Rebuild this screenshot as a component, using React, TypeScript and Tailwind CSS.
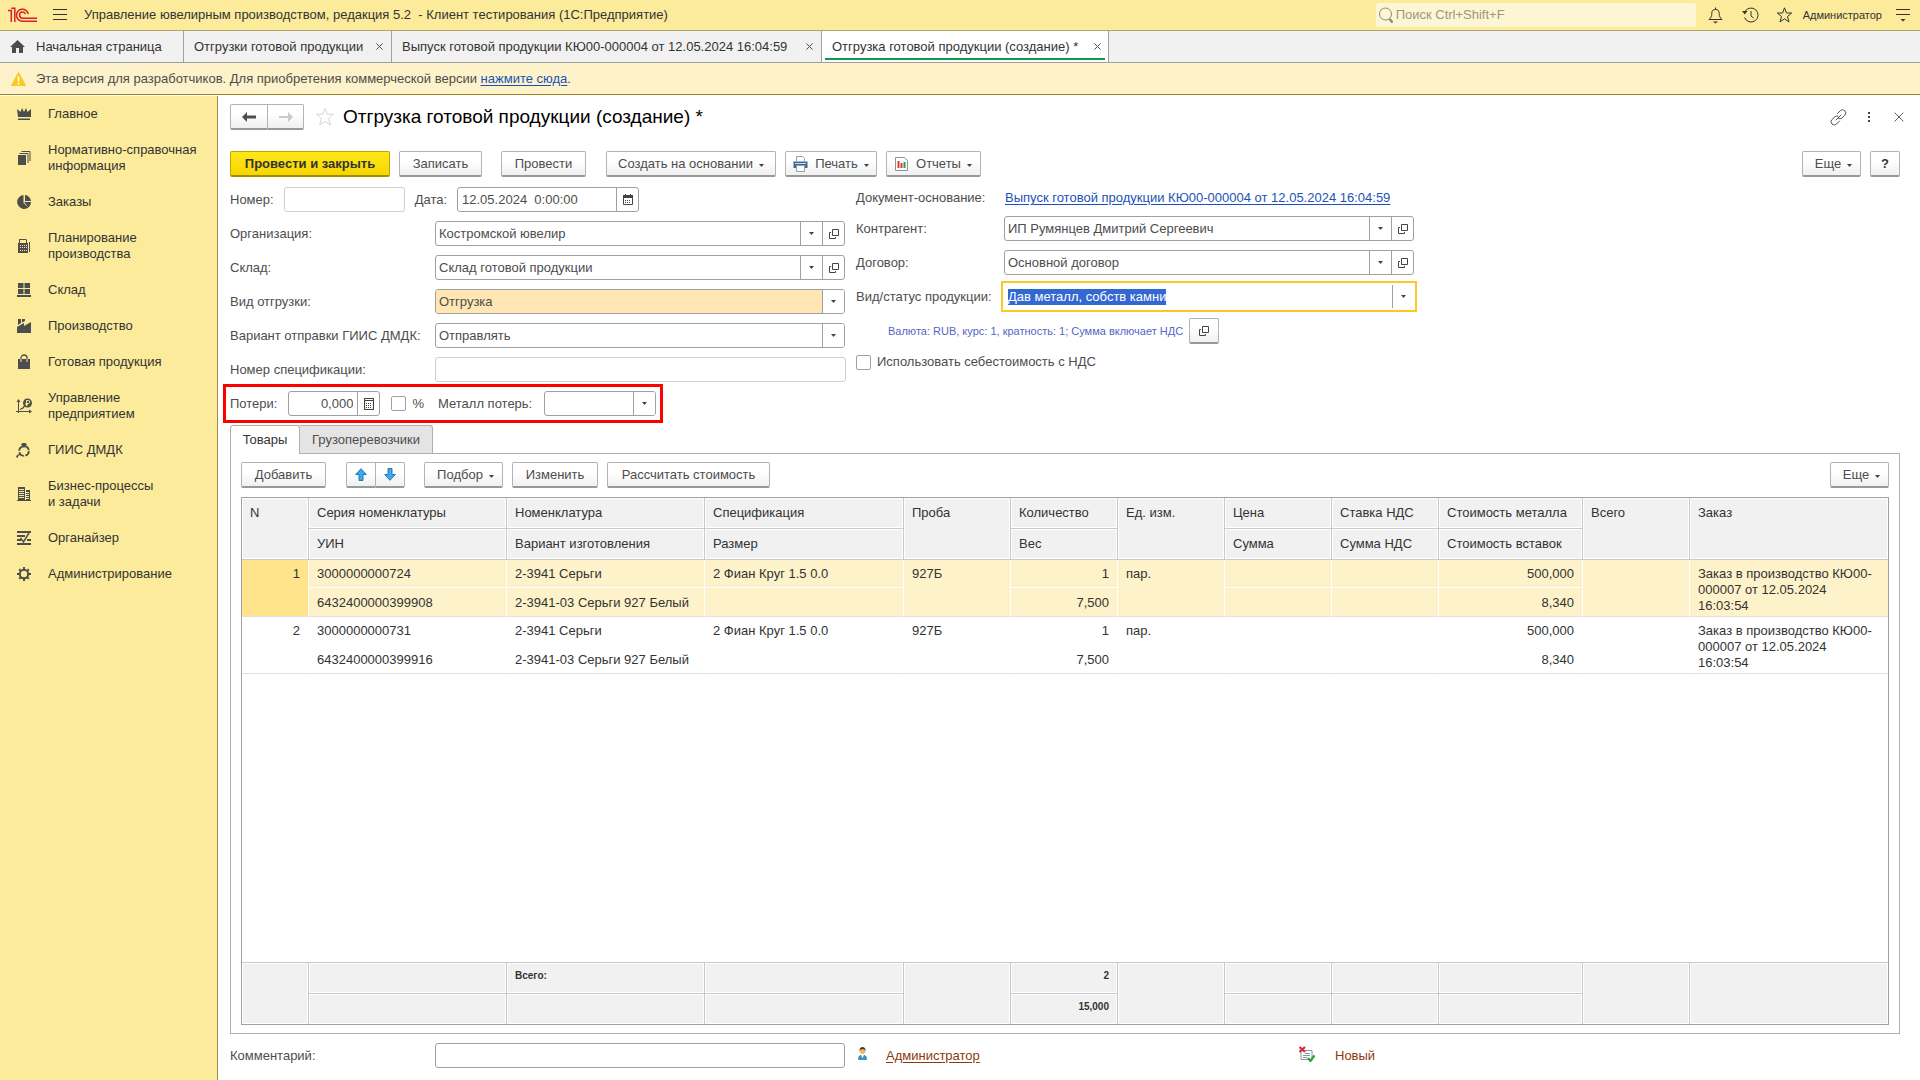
import { useEffect, useRef } from "react";
import type { ReactNode } from "react";
import { clsx } from "clsx";

const ink = "#4d4d4d";

function NavIcon({ name }: { name: string }) {
  return (
    <svg width="16" height="16" viewBox="0 0 16 16" fill={ink} className="shrink-0">
      {name === "crown" && (
        <>
          <path d="M1 3l3.5 3L6 2l2 4 2-4 1.5 4L15 3v8H2z" />
          <path d="M2 12.5h12V14H2z" />
        </>
      )}
      {name === "docs" && (
        <>
          <path d="M2 5h8v10H2z" />
          <path d="M3.500 3.500H12V13M5.500 1.500h8.500V11" fill="none" stroke={ink} />
        </>
      )}
      {name === "pie" && (
        <path d="M7.500 1v8l5 4.500A7 7 0 1 1 7.500 1zM9 1a6.500 6.500 0 0 1 6 6H9zM8 8h7a7 7 0 0 1-2.500 5.500z" />
      )}
      {name === "calc" && (
        <>
          <path
            fillRule="evenodd"
            d="M3 1h7l1 1v3h1v10H2V5h1zM4 2v3h6V2zM4 7v1h1V7zm2 0v1h1V7zm2 0v1h1V7zm2 0v1h1V7zM4 9v1h1V9zm2 0v1h1V9zm2 0v1h1V9zm2 0v1h1V9zM4 12v1h1v-1zm2 0v1h1v-1zm2 0v1h1v-1zm2 0v1h1v-1z"
          />
          <path d="M13 4h1v10h-1z" />
        </>
      )}
      {name === "windows" && (
        <path d="M2 1h5.500v5H2zM8.500 1H14v5H8.500zM2 7h5.500v5H2zM8.500 7H14v5H8.500zM1 13h14v2H1z" />
      )}
      {name === "factory" && (
        <path d="M2 1h3v4L2 7zM6 1h3v2L6 4.500zM1 9l7-4v3l7-4v11H1z" />
      )}
      {name === "bag" && (
        <>
          <path d="M2 5h12v10H2z" />
          <path d="M5 8V4a3 3 0 0 1 6 0v4" fill="none" stroke={ink} strokeWidth="1.300" />
          <path d="M5 5v3M11 5v3" stroke="#fbeb9b" />
        </>
      )}
      {name === "growth" && (
        <>
          <path d="M2.500 15V2M0 13.500h15" fill="none" stroke={ink} />
          <path d="M0.500 4L2.500 1l2 3zM13 11.500l3 2-3 2z" />
          <path d="M4 11.500l3-1.500 1.500-2" fill="none" stroke={ink} strokeWidth="1.300" />
          <circle cx="11.500" cy="5" r="4.500" />
          <path d="M10.500 8V2.500h1.800a1.300 1.300 0 0 1 0 3H9.500M9.500 6.800h2.500" fill="none" stroke="#fbeb9b" />
        </>
      )}
      {name === "ring" && (
        <>
          <circle cx="8" cy="9" r="4.800" fill="none" stroke={ink} strokeWidth="1.800" strokeDasharray="6 1.500" />
          <path d="M5 2.500L6.500 1h3L11 2.500 8 6zM0 15l1-2 3-1.500L5 13l-2.500.5L1.500 16z" />
        </>
      )}
      {name === "building" && (
        <>
          <path
            fillRule="evenodd"
            d="M2 1h7v14H2zM3 3v1h5V3zm0 2v1h5V5zm0 2v1h5V7zm0 2v1h5V9zm0 2v1h5v-1zM10 4h4v11h-4zm0 2v1h3V6zm0 2v1h3V8zm0 2v1h3v-1zm0 2v1h3v-1z"
          />
          <path d="M1 14h14v1H1z" />
        </>
      )}
      {name === "list" && (
        <>
          <path d="M1 1h14v2H1zM1 5h8v2H1zM1 9h4v2H1zM11 9h4v2h-4zM1 13h14v2H1z" />
          <path d="M4.500 8l3 4 5.500-9" fill="none" stroke={ink} strokeWidth="1.500" />
        </>
      )}
      {name === "gear" && (
        <>
          <circle cx="8" cy="8" r="4.200" fill="none" stroke={ink} strokeWidth="2" />
          <path
            d="M8 1v2.500M8 12.500V15M1 8h2.500M12.500 8H15M3.200 3.200l1.700 1.700M11.100 11.100l1.700 1.700M3.200 12.800l1.700-1.700M11.100 4.900l1.700-1.700"
            stroke={ink}
            strokeWidth="2"
          />
        </>
      )}
    </svg>
  );
}

const sections = [
  { icon: "crown", title: "Главное" },
  { icon: "docs", title: "Нормативно-справочная\nинформация" },
  { icon: "pie", title: "Заказы" },
  { icon: "calc", title: "Планирование\nпроизводства" },
  { icon: "windows", title: "Склад" },
  { icon: "factory", title: "Производство" },
  { icon: "bag", title: "Готовая продукция" },
  { icon: "growth", title: "Управление\nпредприятием" },
  { icon: "ring", title: "ГИИС ДМДК" },
  { icon: "building", title: "Бизнес-процессы\nи задачи" },
  { icon: "list", title: "Органайзер" },
  { icon: "gear", title: "Администрирование" },
];

const openTabs = [
  { title: "Отгрузки готовой продукции", width: "min-w-[208px]" },
  { title: "Выпуск готовой продукции КЮ00-000004 от 12.05.2024 16:04:59", width: "min-w-[430px]" },
];

const rows = [
  { n: 1, series: "3000000000724", uin: "6432400000399908" },
  { n: 2, series: "3000000000731", uin: "6432400000399916" },
];

function Caret({ className }: { className?: string }) {
  return (
    <svg width="5" height="3" viewBox="0 0 5 3" fill="#444" className={clsx("shrink-0", className)}>
      <path d="M0 0h5L2.500 3z" />
    </svg>
  );
}

function OpenIcon() {
  return (
    <svg width="10" height="10" viewBox="0 0 10 10" fill="none" stroke="#444">
      <path d="M3.500 0.500h6v6h-6zM2 3.500H0.500v6h6V8" />
    </svg>
  );
}

function CloseIcon({ size = 7 }: { size?: number }) {
  return (
    <svg width={size} height={size} viewBox="0 0 8 8" fill="none" stroke="#4a4a4a" strokeWidth={size > 8 ? 0.7 : 1.1}>
      <path d="M0.500 0.500l7 7M7.500 0.500l-7 7" />
    </svg>
  );
}

function Btn({ children, className, label }: { children: ReactNode; className?: string; label?: string }) {
  return (
    <button
      type="button"
      aria-label={label}
      className={clsx(
        "flex h-[26px] items-center justify-center whitespace-nowrap rounded-[2px] border border-b-2 border-[#b3b3b3] border-b-[#989898] bg-linear-to-b from-white from-40% to-[#f0f0f0]",
        className
      )}
    >
      {children}
    </button>
  );
}

const box = "flex h-[25px] rounded-[3px] border border-[#a0a0a0] bg-white";
const cell = "flex w-[22px] items-center justify-center border-l border-[#a0a0a0]";

function SelectField({
  id,
  value,
  open,
  filled,
  className,
}: {
  id: string;
  value: string;
  open?: boolean;
  filled?: boolean;
  className?: string;
}) {
  return (
    <div className={clsx(box, className)}>
      <div className="grid min-w-0 flex-1 grid-cols-[1fr_22px]">
        <select
          id={id}
          defaultValue={value}
          className={clsx(
            "col-span-2 col-start-1 row-start-1 w-full appearance-none rounded-[2px] pl-[3px] outline-none",
            filled && "bg-[#ffe6b3]"
          )}
        >
          <option>{value}</option>
        </select>
        <span
          className={clsx(cell, "pointer-events-none col-start-2 row-start-1 bg-white", !open && "rounded-r-[2px]")}
        >
          <Caret />
        </span>
      </div>
      {open && (
        <button type="button" aria-label="Открыть" className={cell}>
          <OpenIcon />
        </button>
      )}
    </div>
  );
}

function Row({ id, label, children }: { id: string; label: string; children: ReactNode }) {
  return (
    <div className="flex items-center">
      <label htmlFor={id} className="w-[205px] shrink-0 whitespace-nowrap">
        {label}
      </label>
      {children}
    </div>
  );
}

function RightRow({ id, label, children }: { id: string; label: string; children: ReactNode }) {
  return (
    <div className="flex items-center">
      <label htmlFor={id} className="w-[148px] shrink-0 whitespace-nowrap">
        {label}
      </label>
      {children}
    </div>
  );
}

function Check({ id }: { id: string }) {
  return (
    <input
      id={id}
      type="checkbox"
      className="size-[15px] shrink-0 appearance-none rounded-[2px] border border-[#a0a0a0] bg-white checked:bg-[#ffe17a]"
    />
  );
}

function Cols() {
  return (
    <colgroup>
      <col className="w-[67px]" />
      <col className="w-[198px]" />
      <col className="w-[198px]" />
      <col className="w-[199px]" />
      <col className="w-[107px]" />
      <col className="w-[107px]" />
      <col className="w-[107px]" />
      <col className="w-[107px]" />
      <col className="w-[107px]" />
      <col className="w-[144px]" />
      <col className="w-[107px]" />
      <col />
    </colgroup>
  );
}

const head =
  "h-[31px] border-b border-r border-[#c8c8c8] bg-[#f1f1f1] px-2 py-[7px] text-left align-top font-normal whitespace-nowrap shadow-[inset_0_0_0_1px_#fff]";
const foot =
  "h-[31px] border-r border-t border-[#c8c8c8] bg-[#f1f1f1] px-2 pb-1 text-[10px] font-bold shadow-[inset_0_0_0_1px_#fff]";

function GoodsTable() {
  return (
    <div className="flex flex-1 flex-col border border-[#a0a0a0] text-[#333]">
      <table className="w-full table-fixed border-separate border-spacing-0">
        <Cols />
        <thead>
          <tr>
            <th rowSpan={2} className={head}>N</th>
            <th className={head}>Серия номенклатуры</th>
            <th className={head}>Номенклатура</th>
            <th className={head}>Спецификация</th>
            <th rowSpan={2} className={head}>Проба</th>
            <th className={head}>Количество</th>
            <th rowSpan={2} className={head}>Ед. изм.</th>
            <th className={head}>Цена</th>
            <th className={head}>Ставка НДС</th>
            <th className={head}>Стоимость металла</th>
            <th rowSpan={2} className={head}>Всего</th>
            <th rowSpan={2} className={clsx(head, "border-r-0")}>Заказ</th>
          </tr>
          <tr>
            {["УИН", "Вариант изготовления", "Размер", "Вес", "Сумма", "Сумма НДС", "Стоимость вставок"].map((t) => (
              <th key={t} className={head}>
                {t}
              </th>
            ))}
          </tr>
        </thead>
        {rows.map((row) => {
          const active = row.n === 1;
          const base = "px-2 pb-[5px] align-top whitespace-nowrap border-r border-b border-white";
          const up = clsx(base, "h-[28px] pt-[6px]", active && "bg-[#fdf2c9]");
          const low = clsx(base, "h-[29px] pt-[7px] border-b-[#e0e0e0]", active && "bg-[#fdf2c9]");
          const tall = clsx(base, "pt-[6px] border-b-[#e0e0e0]", active && "bg-[#fdf2c9]");
          return (
            <tbody key={row.n}>
              <tr>
                <td
                  rowSpan={2}
                  className={clsx(base, "pt-[6px] border-b-[#e0e0e0] text-right", active && "bg-[#ffe48c]")}
                >
                  {row.n}
                </td>
                <td className={up}>{row.series}</td>
                <td className={up}>2-3941 Серьги</td>
                <td className={up}>2 Фиан Круг 1.5 0.0</td>
                <td rowSpan={2} className={tall}>927Б</td>
                <td className={clsx(up, "text-right")}>1</td>
                <td rowSpan={2} className={tall}>пар.</td>
                <td className={up} />
                <td className={up} />
                <td className={clsx(up, "text-right")}>500,000</td>
                <td rowSpan={2} className={tall} />
                <td
                  rowSpan={2}
                  className={clsx(
                    "border-b border-b-[#e0e0e0] px-2 pt-[6px] pb-[2px] align-top",
                    active && "bg-[#fdf2c9]"
                  )}
                >
                  Заказ в производство КЮ00-000007 от 12.05.2024 16:03:54
                </td>
              </tr>
              <tr>
                <td className={low}>{row.uin}</td>
                <td className={low}>2-3941-03 Серьги 927 Белый</td>
                <td className={low} />
                <td className={clsx(low, "text-right")}>7,500</td>
                <td className={low} />
                <td className={low} />
                <td className={clsx(low, "text-right")}>8,340</td>
              </tr>
            </tbody>
          );
        })}
      </table>

      <table className="mt-auto w-full table-fixed border-separate border-spacing-0">
        <Cols />
        <tbody>
          <tr>
            <td rowSpan={2} className={foot} />
            <td className={foot} />
            <td className={foot}>Всего:</td>
            <td className={foot} />
            <td rowSpan={2} className={foot} />
            <td className={clsx(foot, "text-right")}>2</td>
            <td rowSpan={2} className={foot} />
            <td className={foot} />
            <td className={foot} />
            <td className={foot} />
            <td rowSpan={2} className={foot} />
            <td rowSpan={2} className={clsx(foot, "border-r-0")} />
          </tr>
          <tr>
            <td className={foot} />
            <td className={foot} />
            <td className={foot} />
            <td className={clsx(foot, "text-right")}>15,000</td>
            <td className={foot} />
            <td className={foot} />
            <td className={foot} />
          </tr>
        </tbody>
      </table>
    </div>
  );
}

function TitleBar() {
  return (
    <header className="flex h-[31px] items-center border-b border-[#a9a673] bg-[#fbeb9b] pl-2 pr-[10px] text-[#333]">
      <svg width="30" height="16" viewBox="0 0 30 16" fill="none" stroke="#da1f26" strokeWidth="1.500">
        <path d="M0 3.500h3.300V15M3.300 1.300H6.800V15" />
        <path d="M20.300 7A6 6 0 1 0 14.500 14.200H29" />
        <path d="M17.500 7A3.100 3.100 0 1 0 14.500 11.200H29" />
      </svg>
      <button type="button" aria-label="Меню" className="mx-[15px]">
        <svg width="14" height="12" viewBox="0 0 14 12" stroke="#333">
          <path d="M0 0.500h14M0 5.500h14M0 10.500h14" />
        </svg>
      </button>
      <p className="ml-[2px] whitespace-pre">
        Управление ювелирным производством, редакция 5.2  - Клиент тестирования (1С:Предприятие)
      </p>
      <div className="ml-auto flex h-6 w-[320px] items-center rounded-[2px] bg-[#fdf6d5] pl-[3px]">
        <svg width="15" height="17" viewBox="0 0 15 17" fill="none" stroke="#8d8a78" className="shrink-0">
          <circle cx="6.500" cy="7" r="6" />
          <path d="M10.500 12l3 3.500" strokeWidth="2.500" />
        </svg>
        <input
          aria-label="Поиск"
          placeholder="Поиск Ctrl+Shift+F"
          className="ml-[2px] min-w-0 flex-1 bg-transparent outline-none placeholder:text-[#9c967c]"
        />
      </div>
      <button type="button" aria-label="Уведомления" className="ml-3">
        <svg width="15" height="18" viewBox="0 0 15 18" fill="none" stroke="#333">
          <path d="M1 13.500h13c-2-2-2.800-3-2.800-6C11.200 4.500 10 3.500 7.500 3.500S3.800 4.500 3.800 7.500C3.800 10.500 3 11.500 1 13.500zM7.500 3.500V1.500" />
          <path d="M5 15.500h5L7.500 17.500z" fill="#333" stroke="none" />
        </svg>
      </button>
      <button type="button" aria-label="История" className="ml-[19px]">
        <svg width="17" height="18" viewBox="0 0 17 18" fill="none" stroke="#333">
          <path d="M3 5.500a7 7 0 1 1-.5 6" />
          <path d="M9 5v5l2.500 2" />
          <path d="M0 5h5.500L2.800 8.500z" fill="#333" stroke="none" />
        </svg>
      </button>
      <button type="button" aria-label="Избранное" className="ml-[17px]">
        <svg width="17" height="18" viewBox="0 0 17 18" fill="none" stroke="#333">
          <path d="M8.500 1.800l1.900 5.200h5.300l-4.200 3.500 1.500 5.500-4.500-3.200L4 16l1.500-5.500L1.300 7h5.300z" />
        </svg>
      </button>
      <a href="#user" className="ml-[10px] text-[11px]">Администратор</a>
      <button type="button" aria-label="Настройки" className="ml-[14px]">
        <svg width="14" height="14" viewBox="0 0 14 14" stroke="#333">
          <path d="M0 1.500h14M0 6.500h14" />
          <path d="M4.500 11h5L7 13.500z" fill="#333" stroke="none" />
        </svg>
      </button>
    </header>
  );
}

function WindowTabs() {
  return (
    <nav className="flex h-8 border-b border-[#a0a0a0] bg-[#f1f1f1] text-[#333]">
      <a href="#home" className="flex min-w-[184px] items-center border-r border-[#a0a0a0] pl-[10px] pr-4">
        <svg width="15" height="13" viewBox="0 0 15 13" fill={ink}>
          <path d="M7.500 0L15 7h-2v6H9V8H6v5H2V7H0z" />
        </svg>
        <span className="ml-[11px]">Начальная страница</span>
      </a>
      {openTabs.map((t) => (
        <div
          key={t.title}
          className={clsx("flex items-center justify-between gap-2 border-r border-[#a0a0a0] pl-[10px] pr-2", t.width)}
        >
          <a href="#tab">{t.title}</a>
          <button type="button" aria-label="Закрыть вкладку">
            <CloseIcon />
          </button>
        </div>
      ))}
      <div className="min-w-[287px] border-r border-[#a0a0a0] bg-white px-[3px] pb-[2px]">
        <div className="flex h-full items-center justify-between gap-2 border-b-2 border-[#0a9a50] pl-[7px] pr-1 pt-[4px]">
          <a href="#current">Отгрузка готовой продукции (создание) *</a>
          <button type="button" aria-label="Закрыть вкладку">
            <CloseIcon />
          </button>
        </div>
      </div>
    </nav>
  );
}

export default function App() {
  const statusRef = useRef<HTMLInputElement>(null);

  useEffect(() => {
    statusRef.current?.focus();
    statusRef.current?.select();
  }, []);

  return (
    <div className="flex min-h-screen flex-col bg-white font-['Liberation_Sans',Arial,sans-serif] text-[13px] leading-4 text-[#4d4d4d]">
      <TitleBar />
      <WindowTabs />
      <div className="flex h-8 items-center border-b border-[#98801c] bg-[#fdf2c9] pl-[11px]">
        <svg width="15" height="14" viewBox="0 0 15 14">
          <path d="M7.500 0.500L14.500 13.500H0.500z" fill="#fbc81e" stroke="#fbc81e" strokeLinejoin="round" />
          <path d="M7.500 4.500v5M7.500 10.500v2" stroke="#fff" strokeWidth="1.600" />
        </svg>
        <p className="ml-[10px]">
          Эта версия для разработчиков. Для приобретения коммерческой версии{" "}
          <a href="#buy" className="text-[#1a53b5] underline underline-offset-2">нажмите сюда</a>.
        </p>
      </div>

      <div className="flex flex-1">
        <aside className="mt-[1px] w-[218px] shrink-0 border-r border-[#a08f45] bg-[#fbeb9b] text-[#333]">
          {sections.map((s) => (
            <a key={s.icon} href={"#" + s.icon} className="flex items-center gap-4 py-[10px] pl-4">
              <NavIcon name={s.icon} />
              <span className="whitespace-pre">{s.title}</span>
            </a>
          ))}
        </aside>

        <main className="flex min-w-0 flex-1 flex-col pl-3 pr-5 pt-[10px]">
          <div className="flex h-6 items-center">
            <div className="flex">
              <Btn label="Назад" className="w-[38px] rounded-r-none">
                <svg width="14" height="10" viewBox="0 0 14 10" fill={ink}>
                  <path d="M0 5l5-5v3.500h9v3H5V10z" />
                </svg>
              </Btn>
              <Btn label="Вперед" className="w-[36px] rounded-l-none border-l-0">
                <svg width="14" height="10" viewBox="0 0 14 10" fill="#c9c9c9">
                  <path d="M14 5L9 0v4H0v2h9v4z" />
                </svg>
              </Btn>
            </div>
            <svg width="20" height="20" viewBox="0 0 20 20" fill="none" stroke="#d5d5d5" className="ml-[11px]">
              <path d="M10 1.500l2.300 5.700h6.200l-5 4.300 1.900 6.500-5.400-3.700L4.600 18l1.900-6.500-5-4.300h6.200z" />
            </svg>
            <h1 className="ml-2 text-[19px] leading-6 text-black">Отгрузка готовой продукции (создание) *</h1>
            <div className="ml-auto -mr-1 flex items-center">
              <button type="button" aria-label="Получить ссылку">
                <svg width="17" height="17" viewBox="0 0 17 17" fill="none" stroke="#555" strokeLinecap="round">
                  <path d="M7.500 4.500l2.800-2.800a3 3 0 0 1 4.500 4.500L12 9a3 3 0 0 1-3.500.5" />
                  <path d="M9.500 12l-3 3A3 3 0 0 1 2 10.500L4.800 7.800A3 3 0 0 1 8 7.200M6 11l5-5" />
                </svg>
              </button>
              <button type="button" aria-label="Ещё действия" className="ml-5">
                <svg width="4" height="14" viewBox="0 0 4 14" fill="#444">
                  <path d="M1 2h2v2H1zM1 6h2v2H1zM1 10h2v2H1z" />
                </svg>
              </button>
              <button type="button" aria-label="Закрыть" className="ml-[23px]">
                <CloseIcon size={10} />
              </button>
            </div>
          </div>

          <div className="mt-[22px] flex">
            <button
              type="button"
              className="flex h-[26px] w-[160px] items-center justify-center rounded-[2px] border border-b-2 border-[#c2a400] border-b-[#a68d00] bg-linear-to-b from-[#ffe817] to-[#f7d600] font-bold text-[#333]"
            >
              Провести и закрыть
            </button>
            <Btn className="ml-[9px] w-[83px]">Записать</Btn>
            <Btn className="ml-[19px] w-[85px]">Провести</Btn>
            <Btn className="ml-5 w-[170px]">
              Создать на основании <Caret className="ml-[6px] mt-1" />
            </Btn>
            <Btn className="ml-[9px] w-[92px]">
              <svg width="15" height="16" viewBox="0 0 15 16" className="mr-[7px]">
                <path d="M3.500 5V0.500h6l2 2V5" fill="#fff" stroke="#8aa0b4" />
                <path d="M0.500 5.500h14V12h-14z" fill="#3c6a94" />
                <path d="M2 7.500h11" stroke="#c8d8e6" />
                <path d="M3.500 9.500h8v6h-8z" fill="#fff" stroke="#8aa0b4" />
              </svg>
              Печать <Caret className="ml-[6px] mt-1" />
            </Btn>
            <Btn className="ml-[9px] w-[95px]">
              <svg width="13" height="14" viewBox="0 0 13 14" className="mr-2">
                <path d="M0.500 0.500h9l3 3v10h-12z" fill="#fff" stroke="#8296a8" />
                <path d="M2.500 4h2v7h-2z" fill="#e03a2e" />
                <path d="M5.500 6h2v5h-2z" fill="#e03a2e" />
                <path d="M8.500 5h2v6h-2z" fill="#24a148" />
              </svg>
              Отчеты <Caret className="ml-[6px] mt-1" />
            </Btn>
            <Btn className="ml-auto w-[59px]">
              <span className="ml-1">Еще</span> <Caret className="ml-[6px] mt-1" />
            </Btn>
            <Btn label="Справка" className="ml-[9px] w-[30px] font-bold text-[#333]">?</Btn>
          </div>

          <div className="mt-[10px] flex items-start gap-[10px]">
            <div className="flex w-[616px] flex-col gap-[9px]">
              <div className="flex items-center">
                <label htmlFor="number">Номер:</label>
                <input id="number" className="ml-[10px] h-[25px] w-[121px] rounded-[3px] border border-[#cfcfcf] px-1" />
                <label htmlFor="date" className="ml-[10px]">Дата:</label>
                <div className={clsx(box, "ml-[10px] w-[182px]")}>
                  <input id="date" defaultValue="12.05.2024  0:00:00" className="min-w-0 flex-1 whitespace-pre px-1 outline-none" />
                  <button type="button" aria-label="Выбрать дату" className={cell}>
                    <svg width="10" height="11" viewBox="0 0 10 11">
                      <path d="M0.500 1.500h9v9h-9z" fill="#fff" stroke="#444" />
                      <path d="M0 1h10v3H0zM2 0h1v2H2zM7 0h1v2H7z" fill="#444" />
                      <path d="M2 6.500h6M2 8.500h6" stroke="#444" strokeDasharray="1 1" />
                    </svg>
                  </button>
                </div>
              </div>
              <Row id="org" label="Организация:">
                <SelectField id="org" value="Костромской ювелир" open className="w-[410px]" />
              </Row>
              <Row id="stock" label="Склад:">
                <SelectField id="stock" value="Склад готовой продукции" open className="w-[410px]" />
              </Row>
              <Row id="kind" label="Вид отгрузки:">
                <SelectField id="kind" value="Отгрузка" filled className="w-[410px]" />
              </Row>
              <Row id="giis" label="Вариант отправки ГИИС ДМДК:">
                <SelectField id="giis" value="Отправлять" className="w-[410px]" />
              </Row>
              <Row id="spec" label="Номер спецификации:">
                <input id="spec" className="h-[25px] w-[411px] rounded-[3px] border border-[#cfcfcf] px-1" />
              </Row>
            </div>

            <div className="flex flex-col pt-[3px]">
              <div className="mb-[10px] flex">
                <span className="w-[149px]">Документ-основание:</span>
                <a href="#base" className="whitespace-nowrap text-[#1a53b5] underline underline-offset-2">
                  Выпуск готовой продукции КЮ00-000004 от 12.05.2024 16:04:59
                </a>
              </div>
              <div className="flex flex-col gap-[9px]">
                <RightRow id="partner" label="Контрагент:">
                  <SelectField id="partner" value="ИП Румянцев Дмитрий Сергеевич" open className="w-[410px]" />
                </RightRow>
                <RightRow id="contract" label="Договор:">
                  <SelectField id="contract" value="Основной договор" open className="w-[410px]" />
                </RightRow>
              </div>
              <div className="mt-[6px] flex items-center">
                <label htmlFor="status" className="w-[145px] shrink-0 whitespace-nowrap">
                  Вид/статус продукции:
                </label>
                <div className="flex h-[31px] w-[416px] items-center border-2 border-[#fbc926] py-[2px] pl-[5px] pr-[1px]">
                  <input
                    id="status"
                    ref={statusRef}
                    defaultValue="Дав металл, собств камни"
                    className="min-w-0 flex-1 outline-none selection:bg-[#3367d1] selection:text-white"
                  />
                  <button type="button" aria-label="Выбрать" className={clsx(cell, "h-full")}>
                    <Caret />
                  </button>
                </div>
              </div>
              <div className="mt-[6px] flex items-center pl-8">
                <span className="w-[301px] whitespace-nowrap text-[11px] text-[#5466c4]">
                  Валюта: RUB, курс: 1, кратность: 1; Сумма включает НДС
                </span>
                <Btn label="Изменить валюту" className="w-[30px]">
                  <OpenIcon />
                </Btn>
              </div>
              <div className="mt-[10px] flex items-center gap-[6px]">
                <Check id="cost" />
                <label htmlFor="cost">Использовать себестоимость с НДС</label>
              </div>
            </div>
          </div>

          <div className="-ml-[7px] mt-[2px] flex h-[39px] items-center self-start border-[3px] border-[#fe0000] px-1">
            <label htmlFor="loss">Потери:</label>
            <div className={clsx(box, "ml-[11px] w-[92px]")}>
              <input id="loss" defaultValue="0,000" className="min-w-0 flex-1 px-1 text-right outline-none" />
              <button type="button" aria-label="Калькулятор" className={cell}>
                <svg width="10" height="12" viewBox="0 0 10 12" fill="none" stroke="#444">
                  <path d="M0.500 0.500h9v11h-9zM1 2.500h8" strokeWidth="1.200" />
                  <path d="M2 5.500h6M2 7.500h6M2 9.500h6" strokeDasharray="1 1" />
                </svg>
              </button>
            </div>
            <span className="ml-[11px] flex">
              <Check id="percent" />
            </span>
            <label htmlFor="percent" className="ml-[6px]">%</label>
            <label htmlFor="metal" className="ml-[14px]">Металл потерь:</label>
            <SelectField id="metal" value="" className="ml-3 w-[112px]" />
          </div>

          <div role="tablist" className="mt-[2px] flex h-[28px]">
            <button
              type="button"
              role="tab"
              aria-selected="true"
              className="z-10 -mb-[1px] w-[70px] rounded-t-[3px] border border-b-0 border-[#b0b0b0] bg-white text-[#333]"
            >
              Товары
            </button>
            <button
              type="button"
              role="tab"
              aria-selected="false"
              className="w-[133px] rounded-tr-[3px] border border-l-0 border-b-0 border-[#b0b0b0] bg-[#e4e4e4]"
            >
              Грузоперевозчики
            </button>
          </div>

          <div className="flex flex-1 flex-col border border-[#b0b0b0] px-[10px] pb-[8px] pt-[8px]">
            <div className="mb-[9px] flex">
              <Btn className="w-[85px]">Добавить</Btn>
              <Btn label="Переместить вверх" className="ml-5 w-[30px] rounded-r-none">
                <svg width="12" height="13" viewBox="0 0 12 13" fill="#3fa9e6" stroke="#1f7ab5">
                  <path d="M6 0.700L11.300 6.500H8v6H4v-6H0.700z" />
                </svg>
              </Btn>
              <Btn label="Переместить вниз" className="w-[29px] rounded-l-none border-l-0">
                <svg width="12" height="13" viewBox="0 0 12 13" fill="#3fa9e6" stroke="#1f7ab5">
                  <path d="M6 12.300L0.700 6.500H4v-6h4v6h3.300z" />
                </svg>
              </Btn>
              <Btn className="ml-[19px] w-[79px]">
                <span className="ml-1">Подбор</span> <Caret className="ml-[6px] mt-1" />
              </Btn>
              <Btn className="ml-[9px] w-[86px]">Изменить</Btn>
              <Btn className="ml-[9px] w-[163px]">Рассчитать стоимость</Btn>
              <Btn className="ml-auto w-[59px]">
                <span className="ml-1">Еще</span> <Caret className="ml-[6px] mt-1" />
              </Btn>
            </div>
            <GoodsTable />
          </div>

          <div className="mb-3 mt-[9px] flex items-center">
            <label htmlFor="comment" className="w-[205px] shrink-0">Комментарий:</label>
            <input id="comment" className="h-[25px] w-[410px] rounded-[3px] border border-[#a0a0a0] px-1" />
            <svg width="11" height="13" viewBox="0 0 11 14" className="mb-1 ml-3">
              <path d="M1 14c-1-3 1-5.500 3-5.500h3c2 0 4 2.500 3 5.500z" fill="#3b93c4" />
              <path d="M4 8.500h3L5.500 12z" fill="#fff" />
              <circle cx="5.500" cy="4.500" r="3" fill="#f0b860" />
              <path d="M2.300 4.500C2 1.500 3.500 0 5.500 0S9 1.500 8.700 4.500C8 2.800 7 2.500 5.500 2.500S3 2.800 2.300 4.500z" fill="#4a3a20" />
            </svg>
            <a href="#author" className="ml-[18px] w-[413px] text-[#8b3a0e]">
              <span className="underline underline-offset-2">Администратор</span>
            </a>
            <svg width="16" height="16" viewBox="0 0 16 16" className="mb-1 shrink-0">
              <path d="M3 4.500h10v9H2V6" fill="#fff" stroke="#8296a8" />
              <path d="M6 7.500h5M4 9.500h7M4 11.500h4" stroke="#8296a8" />
              <path d="M0.500 1l5.500 5M6 1L0.500 6" stroke="#d92b2b" strokeWidth="2.200" />
              <path d="M9 12l2.500 3L15.500 9.500" fill="none" stroke="#23a63a" strokeWidth="2.200" />
            </svg>
            <span className="ml-5 text-[#8b3a0e]">Новый</span>
          </div>
        </main>
      </div>
    </div>
  );
}
